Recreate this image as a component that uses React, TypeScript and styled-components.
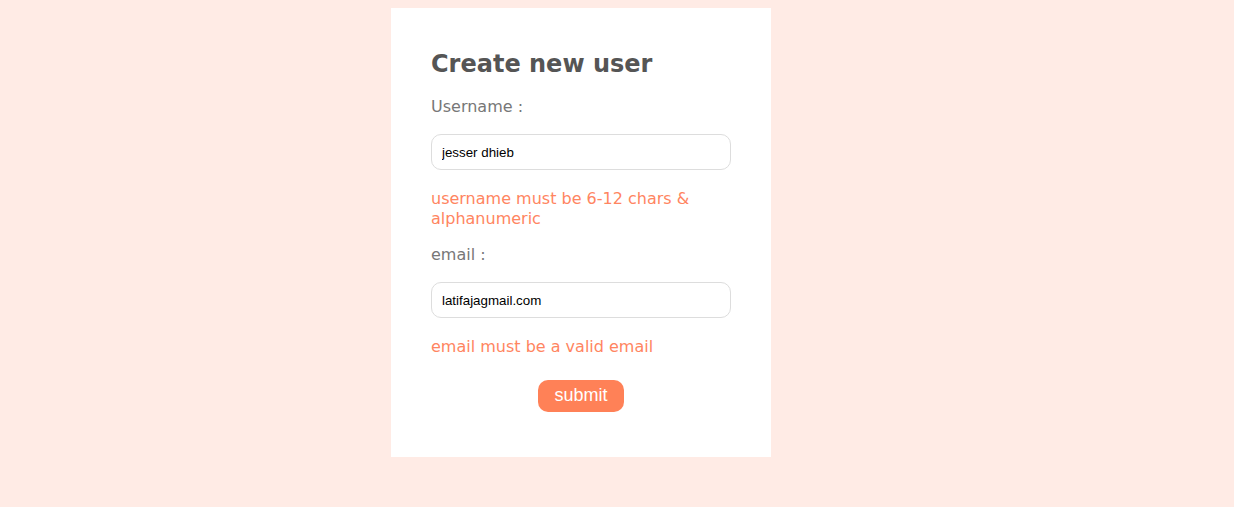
import React from "react";
import styled, { createGlobalStyle } from "styled-components";

const Global = createGlobalStyle`
  html, body { margin: 0; padding: 0; }
  body {
    background: #ffebe5;
    font-family: "DejaVu Sans", Verdana, sans-serif;
  }
`;

const Page = styled.div`
  display: flex;
  justify-content: center;
  padding: 8px 72px 0 0;
`;

const Card = styled.form`
  width: 300px;
  background: #ffffff;
  padding: 42px 40px 45px;
  display: flex;
  flex-direction: column;
`;

const Title = styled.h2`
  margin: 0 0 19px;
  font-size: 24px;
  font-weight: bold;
  color: #555555;
`;

const Label = styled.label`
  font-size: 16px;
  color: #777777;
  margin-bottom: 18.4px;
`;

const Input = styled.input`
  box-sizing: border-box;
  width: 300px;
  height: 36px;
  border: 1px solid #dddddd;
  border-radius: 10px;
  padding: 0 10px;
  font-family: "Liberation Sans", Arial, sans-serif;
  font-size: 13.33px;
  color: #000000;
  outline: none;
`;

const ErrorText = styled.div`
  font-size: 16px;
  color: #ff8561;
  margin: 18.5px 0 16px;
  line-height: 20px;
`;

const Button = styled.button`
  align-self: center;
  margin-top: 7px;
  height: 32px;
  padding: 0 16px;
  border: none;
  border-radius: 10px;
  background: #ff8157;
  color: #ffffff;
  font-family: "Liberation Sans", Arial, sans-serif;
  font-size: 18px;
  cursor: pointer;
`;

export default function App() {
  return (
    <>
      <Global />
      <Page>
        <Card onSubmit={(e) => e.preventDefault()}>
          <Title>Create new user</Title>
          <Label>Username :</Label>
          <Input type="text" defaultValue="jesser dhieb" />
          <ErrorText>username must be 6-12 chars &amp; alphanumeric</ErrorText>
          <Label>email :</Label>
          <Input type="text" defaultValue="latifajagmail.com" />
          <ErrorText>email must be a valid email</ErrorText>
          <Button type="submit">submit</Button>
        </Card>
      </Page>
    </>
  );
}
